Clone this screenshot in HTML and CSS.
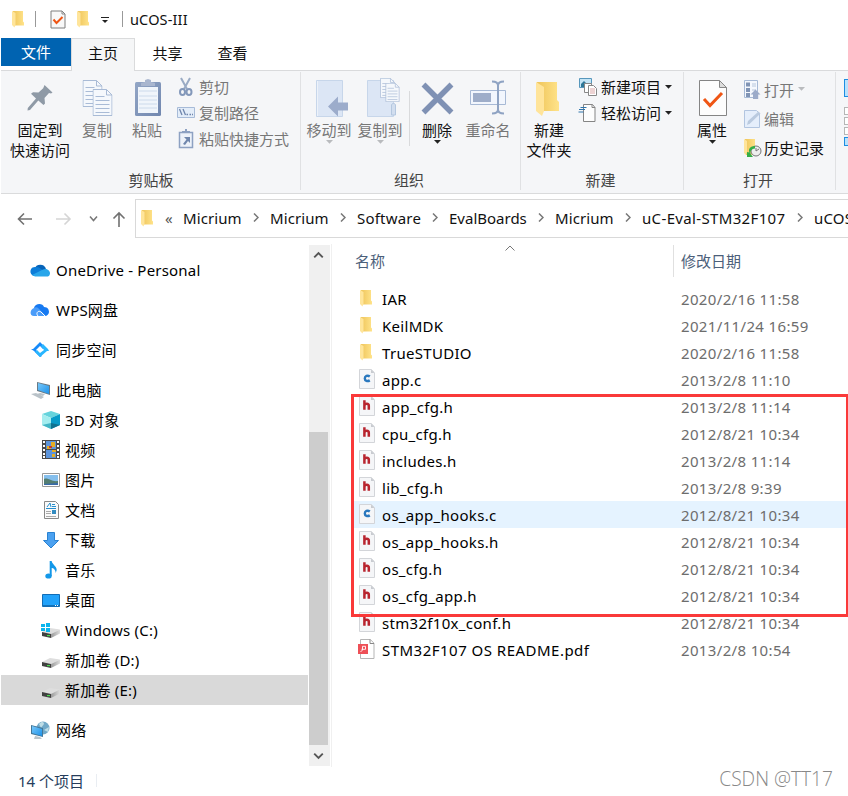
FILE: index.html
```html
<!DOCTYPE html>
<html lang="zh-CN">
<head>
<meta charset="utf-8">
<title>uCOS-III</title>
<link rel="stylesheet" href="styles.css">
</head>
<body>
<svg class="defs" aria-hidden="true">
  <defs>
    <linearGradient id="gold" x1="0" x2="1"><stop offset="0" stop-color="#efc55b"/><stop offset="1" stop-color="#ffe38a"/></linearGradient>
    <linearGradient id="clip" x1="0" x2="1" y2="1"><stop offset="0" stop-color="#93a6c6"/><stop offset="1" stop-color="#7187af"/></linearGradient>
    <linearGradient id="drive" x1="0" x2="1"><stop offset="0" stop-color="#999"/><stop offset="1" stop-color="#ddd"/></linearGradient>
    <linearGradient id="screen" x1="0" x2="1" y2="1"><stop offset="0" stop-color="#78c8fa"/><stop offset="1" stop-color="#1c92ea"/></linearGradient>
    <symbol id="folder" viewBox="0 0 14 18"><path d="M2 1h10v10.500l1 1v3H3z" fill="url(#gold)"/><path d="M1 1l3.500 2v11.500l-1 3L1 15z" fill="#ffe59b"/></symbol>
    <symbol id="page-c" viewBox="0 0 16 20"><path d="M.5.5h11.800l3.200 3.200v15.800H.5z" fill="#f5f6f8" stroke="#d3d5d9"/><path d="M12 .5V4h3.500z" fill="#c8cbd0"/><path d="M10.800 7.500C8.500 5.800 5.800 7 5.800 9.400s2.700 3.400 5 2" fill="none" stroke="#2a78be" stroke-width="2.400"/></symbol>
    <symbol id="page-h" viewBox="0 0 16 20"><path d="M.5.5h11.800l3.200 3.200v15.800H.5z" fill="#f5f6f8" stroke="#d3d5d9"/><path d="M12 .5V4h3.500z" fill="#c8cbd0"/><path d="M5.400 4.200v9.600M5.400 9.300c.7-2 4.400-2.100 4.400.5v4" fill="none" stroke="#b8252f" stroke-width="2.500"/></symbol>
    <symbol id="page-pdf" viewBox="0 0 17 20"><path d="M2.500.5h9.800l3.700 3.700v15.300H2.500z" fill="#fff" stroke="#b5b5b5"/><path d="M12 .5v4h4" fill="none" stroke="#888"/><path d="M0 5h10v10H0z" fill="#ee5057"/><path d="M2.500 13l2-2V7.300h3v3h-4" fill="none" stroke="#fff" stroke-width=".9"/></symbol>
    <symbol id="check-page" viewBox="0 0 28 36"><path d="M.5.5h20l7 7v28H.5z" fill="#fdfdfd" stroke="#858585"/><path d="M20.500.5v7h7z" fill="#ddd" stroke="#888"/><path d="M5 19l6 6.500L23 13" fill="none" stroke="#ef5514" stroke-width="3"/></symbol>
    <symbol id="caret" viewBox="0 0 7 4"><path d="M0 0h7L3.500 3.700z" fill="currentColor"/></symbol>
    <symbol id="chev" viewBox="0 0 6 9"><path d="M1 .5l4 4-4 4" fill="none" stroke="#777" stroke-width="1.500"/></symbol>
    <symbol id="drv" viewBox="0 0 18 10"><path d="M0 4l8-4 10 1.500L9 6z" fill="#dedede"/><path d="M0 4l9 2v4L0 8z" fill="#414141"/><path d="M9 6l9-4.500v4L9 10z" fill="url(#drive)"/><path d="M5 7h3v1.200H5z" fill="#4adb4f"/></symbol>
    <symbol id="sheet" viewBox="0 0 20 27"><path d="M.5.5H14l5.500 5.500v20.500H.5z" fill="#f5f8fc" stroke="#a9bbd6"/><path d="M14 .5V6h5.500M3 7.500h9M3 11.500h14M3 15.500h14M3 19.500h14M3 23.500h14" fill="none" stroke="#a9bbd6"/></symbol>
  </defs>
</svg>
<div class="window">
  <header class="titlebar">
    <svg class="tb-folder"><use href="#folder"/></svg><i class="bar"></i>
    <svg class="tb-check" viewBox="0 0 16 19"><path d="M1 1h11l3 3v14H1z" fill="#f8f8f8" stroke="#7e7e7e"/><path d="M12 1v3h3" fill="none" stroke="#888"/><path d="M3.500 9.500l3 3.500 6-6" fill="none" stroke="#ef5514" stroke-width="2"/></svg>
    <svg class="tb-folder second"><use href="#folder"/></svg>
    <svg class="tb-menu" viewBox="0 0 8 7"><path d="M0 .5h8" stroke="#222"/><path d="M1 3h6L4 6z" fill="#222"/></svg><i class="bar end"></i>
    <span>uCOS-III</span>
  </header>
  <nav class="tabs"><a class="file">文件</a><a class="active">主页</a><a>共享</a><a>查看</a></nav>
  <section class="ribbon">
    <div class="group clipboard">
      <div class="tools">
        <div class="big pin"><svg viewBox="0 0 60 48"><path d="M34.500 13l8 7.500-1.500 1-2-.5-4.500 5 .5 5.500-1.500 1.500-5.200-4.600L20 38l-2.500.5.3-2.500 8.200-9.600-5-4.700 2-1.500 5.500.3 4.700-4.300z" fill="#8f9aa6"/></svg><b>固定到</b><b>快速访问</b></div>
        <div class="big copy muted"><svg viewBox="0 0 30 48"><use href="#sheet" x=".5" y="8" width="20" height="27"/><use href="#sheet" x="10.500" y="17" width="20" height="27"/></svg><b>复制</b></div>
        <div class="big paste muted"><svg viewBox="0 0 30 48"><rect x="3" y="10" width="26" height="34" rx="1.500" fill="url(#clip)"/><path d="M6 15h20v26H6z" fill="#f0f5fb"/><path d="M7 19h18M7 24h18M7 28h18M7 32h18M7 36h18" stroke="#ccdaeb"/><path d="M9 14v-3l4-1V8l3-1 3 1v2l4 1v3z" fill="#a9b6cf"/></svg><b>粘贴</b></div>
        <div class="list muted">
          <div><svg viewBox="0 0 20 20"><path d="M4 1l6 11M13 1L7 12" stroke="#9aabc4" stroke-width="2"/><ellipse cx="5.500" cy="15" rx="2.500" ry="3" fill="none" stroke="#8398ba" stroke-width="2"/><ellipse cx="12" cy="15" rx="2.500" ry="3" fill="none" stroke="#8398ba" stroke-width="2"/></svg>剪切</div>
          <div><svg viewBox="0 0 20 20"><path d="M.5 4.500h17v10H.5z" fill="#e3edf9" stroke="#a7bbd8"/><path d="M2.500 6l2.500 6M6 6l2.500 6M9.500 11.500h1.500M12.500 11.500h1.500M15 11.500h1" stroke="#6e85ac" stroke-width="1.300"/></svg>复制路径</div>
          <div><svg viewBox="0 0 20 20"><path d="M2.500 3.500h13v15h-13z" fill="#edf2f9" stroke="#8da1c2" stroke-width="1.500"/><path d="M5 4V2h3V0h2v2h3v2z" fill="#8da1c2"/><path d="M7 8h6v6l-2-2-3 4-2-1 3.500-4.500z" fill="#7087ad"/></svg>粘贴快捷方式</div>
        </div>
      </div>
      <footer>剪贴板</footer>
    </div>
    <div class="group organize">
      <div class="tools">
        <div class="big muted move"><svg viewBox="0 0 46 48"><path d="M10.500 8.500h26v36h-26z" fill="#dce6f5" stroke="#c7d6ea"/><path d="M11.500 9v35" stroke="#edf2f9"/><path d="M22 34.500l10-10v6h10v8H32v6z" fill="#9caccb"/></svg><b>移动到</b><svg class="caret"><use href="#caret"/></svg></div>
        <div class="big muted copyto"><svg viewBox="0 0 46 48"><path d="M10.500 8.500h26v36h-26z" fill="#dce6f5" stroke="#c7d6ea"/><path d="M34.500 43V33c0-2 4-2 4 0v10z" fill="#d2deef" stroke="#b4c7df"/><use href="#sheet" x="23" y="6" width="15" height="20"/><use href="#sheet" x="28" y="11" width="15" height="19"/></svg><b>复制到</b><svg class="caret"><use href="#caret"/></svg></div>
        <i class="divider"></i>
        <div class="big delete"><svg viewBox="0 0 46 48"><path d="M9.500 12.500l28 28M37.500 12.500l-28 28" stroke="#7f91b4" stroke-width="5.500"/></svg><b>删除</b><svg class="caret"><use href="#caret"/></svg></div>
        <div class="big muted rename"><svg viewBox="0 0 46 48"><path d="M5.500 18.500h35v14h-35z" fill="#f2f6fd" stroke="#a7b9d5"/><path d="M8 21h18v9H8z" fill="#9eadc9"/><path d="M27 9.500c4 0 6 1 6 4v24c0 3-2 4-6 4M39 9.500c-4 0-6 1-6 4v24c0 3 2 4 6 4" fill="none" stroke="#8fa3c3" stroke-width="2"/></svg><b>重命名</b></div>
      </div>
      <footer>组织</footer>
    </div>
    <div class="group create">
      <div class="tools">
        <div class="big newfolder"><svg viewBox="0 0 46 48"><path d="M11 10h20v18l2 2v9H14z" fill="url(#gold)"/><path d="M10 10l8 5v24l-2 5-6-5z" fill="#ffe49a"/></svg><b>新建</b><b>文件夹</b></div>
        <div class="list">
          <div><svg viewBox="0 0 20 20"><path d="M.5 1.500h12v9H.5z" fill="#c5e5f6" stroke="#5797bc"/><path d="M2 7l3-3 4 4v2H2z" fill="#2e7797"/><path d="M5.500 6.500h7v9h-7z" fill="#fff" stroke="#888"/><path d="M9.500 8.500h5l3 3v7h-8z" fill="#fff" stroke="#888"/><path d="M11 12h5M11 14h5M11 16h5" stroke="#dba7a7"/></svg>新建项目<svg class="caret"><use href="#caret"/></svg></div>
          <div><svg viewBox="0 0 20 20"><path d="M4.500 1.500h9l2.500 3v14H4.500z" fill="#fdfdfd" stroke="#858585"/><path d="M13 1.500v3h3" fill="none" stroke="#858585"/><path d="M1.500 4.500h6M0 6.500h6M-.5 9h5" stroke="#3076ad"/></svg>轻松访问<svg class="caret"><use href="#caret"/></svg></div>
        </div>
      </div>
      <footer>新建</footer>
    </div>
    <div class="group open">
      <div class="tools">
        <div class="big props"><svg viewBox="0 0 30 48"><use href="#check-page" x="2" y="8" width="28" height="36"/></svg><b>属性</b><svg class="caret"><use href="#caret"/></svg></div>
        <div class="list">
          <div class="muted"><svg viewBox="0 0 20 20"><path d="M.5.5h13v17H.5z" fill="#f5f8fd" stroke="#a7bad6"/><path d="M2 2.500h4v4H2zM2 8h4v4H2zM2 13h4v4H2z" fill="#8094b5"/><path d="M8 4h4M8 6h4M8 10h4" stroke="#b8c8dd"/><path d="M11.500 9.500l5 5h-2.300V19H9v-4.500H6.500z" fill="#9cabc9"/></svg>打开<svg class="caret"><use href="#caret"/></svg></div>
          <div class="muted"><svg viewBox="0 0 20 20"><path d="M.5 1.500h12l3 3v14H.5z" fill="#e5eefb" stroke="#b2c5e0"/><path d="M3 16l1-4L14.500 2.500l2 2L6 14.500z" fill="#bacadf"/></svg>编辑</div>
          <div><svg viewBox="0 0 20 20"><path d="M1 1h10v10l1 6H2z" fill="url(#gold)"/><path d="M0 1l3 2v11l-1 3-2-2z" fill="#ffe49b"/><circle cx="12" cy="13" r="5" fill="#eee" stroke="#777"/><path d="M12 10v3l3-2" fill="none" stroke="#777"/><path d="M11 8c-5 0-7 3-5.500 6.500L3 14v5h6l-2-2.500C5.500 14 7 11 11 10.500z" fill="#34ad48"/></svg>历史记录</div>
        </div>
      </div>
      <footer>打开</footer>
    </div>
    <div class="group select"><i class="all"></i><i></i><i></i><i></i><i class="all"></i></div>
  </section>
  <div class="address">
    <svg class="nav-arrows" viewBox="0 0 134 38"><path d="M32 20H18.500m5.500-5.500L18.500 20l5.500 5.500" fill="none" stroke="#717171" stroke-width="1.600"/><path d="M56 20h14m-5.500-5.500L70 20l-5.500 5.500" fill="none" stroke="#d5d5d5" stroke-width="1.600"/><path d="M90 17.500l3.500 4 3.500-4" fill="none" stroke="#777" stroke-width="1.500"/><path d="M119 28V14m-5.500 5.500L119 14l5.500 5.500" fill="none" stroke="#717171" stroke-width="1.600"/></svg>
    <div class="path">
      <svg class="path-folder"><use href="#folder"/></svg><span class="more">«</span>
      <span class="micrium">Micrium</span><svg><use href="#chev"/></svg><span class="micrium">Micrium</span><svg><use href="#chev"/></svg><span class="software">Software</span><svg><use href="#chev"/></svg><span class="boards">EvalBoards</span><svg><use href="#chev"/></svg><span class="micrium">Micrium</span><svg><use href="#chev"/></svg><span class="eval">uC-Eval-STM32F107</span><svg><use href="#chev"/></svg><span>uCOS-III</span>
    </div>
  </div>
  <main>
    <aside>
      <div class="root"><svg viewBox="0 0 20 20"><path d="M4.500 9a6 6 0 0 1 11.500 0l-6 5z" fill="#0764b9"/><path d="M4 16a4.500 4.500 0 0 1 2-9c3 0 5 2 8 4l-8 5z" fill="#0d7dd8"/><path d="M2 15l10-5c5-3 8 1 8 3 0 3-2 3.500-3 3.500H5z" fill="#29a6ea"/></svg>OneDrive - Personal</div>
      <div class="root"><svg viewBox="0 0 20 20"><path d="M4 8c1-5 9-5 10-1 4 0 5 3 5 5s-2 4-4 4L7 9z" fill="#1679f1"/><path d="M4 8c3-2 5 1 7 3l5 5H4C-1 16 0 9 4 8z" fill="#4a9cf9"/><path d="M8 16c-3-3 1-7 4-3l3 3" fill="none" stroke="#fff"/></svg>WPS网盘</div>
      <div class="root"><svg viewBox="0 0 20 20"><path d="M1 9h2l7-7 5 5-2 2-3-3-4 4 4 4 2 2-2 1-6-6z" fill="#168afa"/><path d="M19 11h-2l-7 6-5-5 2-2 3 3 4-3-3-4 2-2 5 5z" fill="#29b6ff"/></svg>同步空间</div>
      <div class="root pc"><svg viewBox="0 0 20 20"><path d="M7 2l13 3v10L7 11z" fill="#687a86"/><path d="M8 3l11 3v8L8 10z" fill="url(#screen)"/><path d="M10 13l5 1-2 2-6-2zM1 14l5-1 8 4-3 2z" fill="#b9c2c8"/></svg>此电脑</div>
      <div><svg viewBox="0 0 20 20"><path d="M1 4l9-3 9 3-9 4z" fill="#66d3dc"/><path d="M1 4l9 4v11l-9-4z" fill="#a4edef"/><path d="M19 4l-9 4v11l9-4z" fill="#079bc8"/><path d="M1 15l9-2v6z" fill="#43b6c6"/><path d="M10 13l9 2-9 4z" fill="#0e7290"/></svg>3D 对象</div>
      <div><svg viewBox="0 0 20 20"><path d="M1 0h18v19H1z" fill="#494949"/><path d="M2 1h2v2H2zM2 5h2v2H2zM2 9h2v2H2zM2 13h2v2H2zM2 16h2v2H2zM16 1h2v2h-2zM16 5h2v2h-2zM16 9h2v2h-2zM16 13h2v2h-2zM16 16h2v2h-2z" fill="#fff"/><path d="M5 1h10v8H5zM5 10h10v8H5z" fill="#5c94db"/><path d="M6 6h4v3H6zM10 2h4v5h-4zM11 10h4v2h-4zM11 14h3v3h-3z" fill="#e4ad24"/><path d="M8 6h3v2H8z" fill="#bd3a37"/></svg>视频</div>
      <div><svg viewBox="0 0 20 20"><path d="M1.500 3.500h17v13h-17z" fill="#fff" stroke="#999"/><path d="M3 5h14v10H3z" fill="#85bfed"/><path d="M3 9c4-2 7 3 14 2v4H3z" fill="#547e72"/><path d="M3 14l14-1v2H3z" fill="#396baa"/></svg>图片</div>
      <div><svg viewBox="0 0 20 20"><path d="M3.500 1.500h11l3 3v14h-14z" fill="#fafafa" stroke="#888"/><path d="M6 7l3-4 1 4M11 4.500h3M11 6.500h4M5 8.500h10" stroke="#258fcf" fill="none"/><path d="M5 11.500h5M5 13.500h5M5 16.500h10" stroke="#aaa"/><path d="M11 10h4v4h-4z" fill="#328bc0"/></svg>文档</div>
      <div><svg viewBox="0 0 20 20"><path d="M6.500 2.500h7v8h4L10 18l-7.500-7.500h4z" fill="#4ba1f0" stroke="#2982d2"/></svg>下载</div>
      <div><svg viewBox="0 0 20 20"><ellipse cx="7.500" cy="16" rx="3.200" ry="2.600" fill="#1398e9"/><path d="M8.700 16V1h2c0 3 5 5 5 9l-1 3c0-3-2-5-4-5v8z" fill="#1398e9"/></svg>音乐</div>
      <div><svg viewBox="0 0 20 20"><path d="M1.500 4.500h17v12h-17z" fill="#22a2fa" stroke="#126db6"/><path d="M2 15.500h16" stroke="#1572b7"/><path d="M14 15.500h1M16 15.500h1" stroke="#fff"/></svg>桌面</div>
      <div><svg viewBox="0 0 20 20"><use href="#drv" x="1" y="8" width="18" height="10"/><path d="M0 4h4v3H0zM5 3h4v4H5zM0 8h4v3H0zM5 8h4v4H5z" fill="#0cb5ed"/></svg>Windows (C:)</div>
      <div><svg viewBox="0 0 20 20"><use href="#drv" x="1" y="8" width="18" height="10"/></svg>新加卷 (D:)</div>
      <div class="selected"><svg viewBox="0 0 20 20"><use href="#drv" x="1" y="8" width="18" height="10"/></svg>新加卷 (E:)</div>
      <div class="root network"><svg viewBox="0 0 20 20"><circle cx="13" cy="8" r="6.500" fill="#71a9c8"/><path d="M9 4c3-3 5-2 5 0l-3 4M14 10l5-3-1 5z" fill="#bedde6"/><path d="M1 5l12 3v9L1 14z" fill="#427799"/><path d="M2 6l10 3v7L2 13z" fill="url(#screen)"/><path d="M5 16l5 1 2 2H4z" fill="#bac4c9"/></svg>网络</div>
    </aside>
    <div class="scrollbar"><svg viewBox="0 0 20 21"><path d="M5.500 12.500L10 8l4.500 4.500" fill="none" stroke="#555" stroke-width="2"/></svg><i></i><svg viewBox="0 0 20 21"><path d="M5.500 8.500L10 13l4.500-4.500" fill="none" stroke="#555" stroke-width="2"/></svg></div>
    <section class="files">
      <div class="head"><span>名称</span><svg viewBox="0 0 10 6"><path d="M.5 5.500L5 1l4.500 4.500" fill="none" stroke="#777"/></svg><span class="date-head">修改日期</span></div>
      <div class="row"><svg class="dir"><use href="#folder"/></svg><span>IAR</span><time>2020/2/16 11:58</time></div>
      <div class="row"><svg class="dir"><use href="#folder"/></svg><span>KeilMDK</span><time>2021/11/24 16:59</time></div>
      <div class="row"><svg class="dir"><use href="#folder"/></svg><span>TrueSTUDIO</span><time>2020/2/16 11:58</time></div>
      <div class="row"><svg><use href="#page-c"/></svg><span>app.c</span><time>2013/2/8 11:10</time></div>
      <div class="row"><svg><use href="#page-h"/></svg><span>app_cfg.h</span><time>2013/2/8 11:14</time></div>
      <div class="row"><svg><use href="#page-h"/></svg><span>cpu_cfg.h</span><time>2012/8/21 10:34</time></div>
      <div class="row"><svg><use href="#page-h"/></svg><span>includes.h</span><time>2013/2/8 11:14</time></div>
      <div class="row"><svg><use href="#page-h"/></svg><span>lib_cfg.h</span><time>2013/2/8 9:39</time></div>
      <div class="row hover"><svg><use href="#page-c"/></svg><span>os_app_hooks.c</span><time>2012/8/21 10:34</time></div>
      <div class="row"><svg><use href="#page-h"/></svg><span>os_app_hooks.h</span><time>2012/8/21 10:34</time></div>
      <div class="row"><svg><use href="#page-h"/></svg><span>os_cfg.h</span><time>2012/8/21 10:34</time></div>
      <div class="row"><svg><use href="#page-h"/></svg><span>os_cfg_app.h</span><time>2012/8/21 10:34</time></div>
      <div class="row"><svg><use href="#page-h"/></svg><span>stm32f10x_conf.h</span><time>2012/8/21 10:34</time></div>
      <div class="row"><svg class="pdf"><use href="#page-pdf"/></svg><span class="wide">STM32F107 OS README.pdf</span><time>2013/2/8 10:54</time></div>
      <div class="marker"></div>
    </section>
  </main>
  <footer class="status"><span>14 个项目</span><i></i><span class="watermark">CSDN @TT17</span></footer>
</div>
</body>
</html>
```
FILE: styles.css
```css
* { box-sizing: border-box; }
body { margin: 0; background: #fff; color: #111; font: 15px/20px "Noto Sans", "Noto Sans CJK SC", sans-serif; }
svg { display: block; flex: none; overflow: visible; }
.defs { position: absolute; width: 0; height: 0; }
.window { width: 848px; height: 796px; overflow: hidden; display: flex; flex-direction: column; white-space: nowrap; }
.titlebar { height: 38px; flex: none; display: flex; align-items: center; padding-left: 11px; }
.titlebar span { margin-left: 7px; font-size: 14.5px; letter-spacing: .15px; }
.tb-folder { width: 14px; height: 18px; }
.bar { width: 1px; height: 16px; background: #999; margin: 0 14px 0 10px; }
.tb-check { width: 16px; height: 19px; }
.tb-folder.second { margin-left: 10px; }
.tb-menu { width: 8px; height: 7px; margin: 3px 0 0 11px; }
.bar.end { margin: 0 0 0 13px; }
.tabs { height: 32px; flex: none; display: flex; padding-left: 1px; text-align: center; line-height: 30px; }
.tabs a { width: 65px; }
.tabs .file { width: 70px; height: 28px; background: #0063b1; color: #fff; line-height: 29px; }
.tabs .active { width: 64px; height: 33px; background: #f5f6f7; border: 1px solid #dadbdc; border-bottom: 0; line-height: 29px; position: relative; z-index: 1; }
.ribbon { height: 124px; flex: none; margin-left: 1px; background: #f5f6f8; border: solid #dadbdc; border-width: 1px 0; border-top-color: #d9dadc; display: flex; }
.group { position: relative; flex: none; display: flex; flex-direction: column; padding-top: 1px; }
.group::after { content: ""; position: absolute; right: 0; top: 1px; bottom: 3px; width: 1px; background: #e0e1e3; }
.group footer { height: 25px; text-align: center; color: #444; line-height: 24px; }
.tools { height: 96px; display: flex; align-items: flex-start; }
.clipboard { width: 300px; }
.organize { width: 220px; }
.organize footer { padding-right: 4px; }
.create { width: 163px; }
.create footer, .open footer { padding-right: 4px; }
.open { width: 152px; }
.big { flex: none; display: flex; flex-direction: column; align-items: center; }
.big > svg:first-child { width: 46px; height: 48px; }
.big b { font-weight: 400; }
.caret { width: 7px; height: 4px; color: #222; }
.muted { color: #777; }
.muted .caret { color: #b9bbbe; }
.pin { width: 60px; margin-left: 9px; }
.pin > svg:first-child { width: 60px; }
.copy, .paste, .props { width: 30px; }
.copy > svg:first-child, .paste > svg:first-child, .props > svg:first-child { width: 30px; }
.copy { margin-left: 12px; }
.paste { margin-left: 20px; }
.list { padding-top: 2px; }
.list > div { display: flex; align-items: center; height: 26px; }
.list > div > svg:first-child { width: 20px; height: 20px; margin-right: 2px; }
.clipboard .list { margin-left: 15px; }
.move { width: 46px; margin-left: 5px; }
.copyto { width: 46px; margin-left: 5px; }
.divider { width: 1px; height: 55px; margin: 19px 4px 0 6px; background: #d9dadc; }
.delete { width: 46px; }
.rename { width: 46px; margin-left: 5px; }
.newfolder { width: 46px; margin-left: 5px; }
.create .list { margin-left: 7px; }
.list > div > .caret { margin: -1px 0 0 4px; }
.props { margin-left: 13px; }
.open .list { margin-left: 17px; padding-top: 3px; }
.open .list > div { height: 29.2px; }
.open .list > div > svg:first-child { margin-right: 0; }
.select { width: 20px; padding: 8px 0 0 8px; }
.select i { width: 12px; height: 8px; border: 1px solid #b6b6b6; background: #fff; margin-bottom: 2px; }
.select .all { height: 18px; border-color: #1d8de1; background: #b9e1fc; margin-bottom: 10px; }
.select .all:last-child { height: 9px; margin: 0; }
.address { height: 44px; flex: none; display: flex; padding-top: 5px; }
.nav-arrows { width: 134px; height: 38px; }
.path { flex: 1; height: 39px; margin-left: 1px; border: 1px solid #d9d9d9; border-right: 0; display: flex; align-items: center; padding-bottom: 2px; overflow: hidden; letter-spacing: .2px; }
.path span { flex: none; }
.path svg { width: 6px; height: 9px; margin: 0 11px; }
.path .path-folder { width: 14px; height: 18px; margin: 0 11px 0 4px; }
.path .more { width: 18px; color: #555; }
.path .micrium { width: 59px; letter-spacing: .1px; }
.path .software { width: 64px; }
.path .boards { width: 78px; letter-spacing: 0; }
.path .eval { width: 144px; letter-spacing: .35px; }
main { height: 529px; flex: none; display: flex; padding-top: 6px; }
aside { width: 308px; padding: 11px 0 0 1px; flex: none; color: #000; letter-spacing: .2px; }
aside > div { height: 30px; display: flex; align-items: center; padding-left: 40px; }
aside > div svg { width: 20px; height: 20px; margin-right: 4px; }
aside .root { padding-left: 29px; margin-bottom: 10px; }
aside .root svg { margin-right: 6px; }
aside .pc { margin-bottom: 0; }
aside .selected { background: #d9d9d9; margin-bottom: 10px; }
.scrollbar { width: 21px; height: 521px; margin: 1px 0 0 1px; background: #f0f0f0; display: flex; flex-direction: column; }
.scrollbar svg { width: 19px; height: 21px; }
.scrollbar i { width: 19px; height: 313px; margin-top: auto; background: #cdcdcd; }
.files { position: relative; flex: 1; min-width: 0; margin-left: 1px; border-left: 1px solid #f0f0f0; }
.head { height: 41px; display: flex; padding: 1px 0 0 23px; color: #4c607a; line-height: 32px; }
.head span:first-child { width: 150px; }
.head svg { width: 10px; height: 6px; }
.head .date-head { height: 32px; margin-left: 158px; padding-left: 7px; border-left: 1px solid #e0e0e0; }
.row { height: 27px; margin-left: 22px; display: flex; align-items: center; }
.row svg { width: 16px; height: 20px; margin: -1px 7px 0 5px; }
.row .dir { width: 14px; height: 18px; margin-right: 9px; }
.row .pdf { width: 17px; margin-left: 4px; }
.row span { width: 299px; color: #000; letter-spacing: .3px; }
.row .wide { letter-spacing: .48px; }
.row time { color: #6d6d6d; letter-spacing: .35px; }
.hover { background: #e5f3ff; }
.marker { position: absolute; left: 19px; top: 150px; right: 0; height: 223px; border: 3px solid #fa3939; border-right-width: 2px; }
.status { flex: 1; display: flex; align-items: center; padding: 0 0 2px 18px; color: #263d5c; }
.status i { width: 1px; height: 13px; background: #e9edf2; margin-left: 12px; }
.watermark { margin: -4px 15px 0 auto; color: #888; font: 300 19.2px/24px "Open Sans", "Noto Sans", sans-serif; }
```
